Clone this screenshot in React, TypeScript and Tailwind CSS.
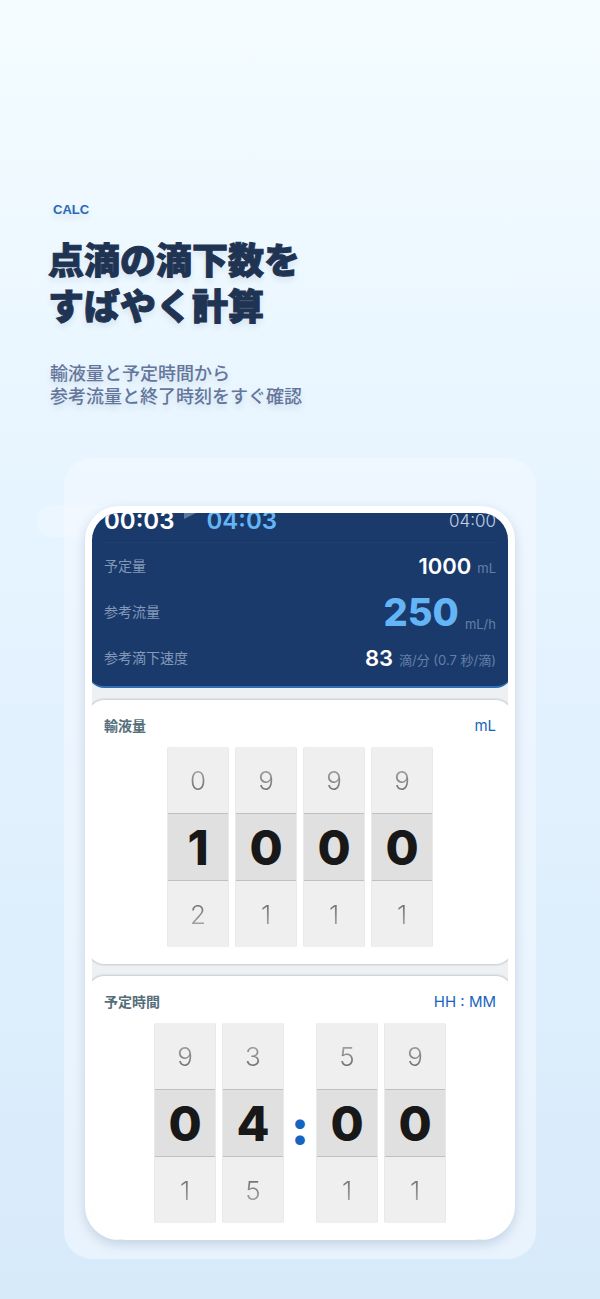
import React from 'react';

interface WheelProps {
  label: string;
  prev: number;
  value: number;
  next: number;
}

const Wheel: React.FC<WheelProps> = ({ label, prev, value, next }) => (
  <div
    role="group"
    aria-label={label}
    className="flex h-[200px] w-[62px] flex-col overflow-hidden rounded-xs border-x border-[#e9e9e9] bg-[#efefef]"
  >
    <button
      type="button"
      className="flex-1 bg-linear-to-b from-[#a8a8a8] from-30% to-[#6a6a6a] to-70% bg-clip-text pt-0.5 text-[26px] leading-none font-light text-transparent"
    >
      {prev}
    </button>
    <output className="flex h-[68px] items-center justify-center border-y border-[#c0c0c0] bg-[#e0e0e0] pt-0.5 text-5xl leading-none font-extrabold text-[#181818]">
      {value}
    </output>
    <button
      type="button"
      className="flex-1 bg-linear-to-b from-[#6a6a6a] from-30% to-[#a8a8a8] to-70% bg-clip-text pt-0.5 text-[26px] leading-none font-light text-transparent"
    >
      {next}
    </button>
  </div>
);

interface ResultRowProps {
  label: string;
  unit: string;
  children: React.ReactNode;
}

const ResultRow: React.FC<ResultRowProps> = ({ label, unit, children }) => (
  <div className="flex h-[46px] items-center justify-between">
    <dt className="text-sm text-[#8499b9]">{label}</dt>
    <dd className="flex items-end gap-1.5">
      {children}
      <span className="text-[13px] leading-6 text-[#6580a8]">{unit}</span>
    </dd>
  </div>
);

const ResultPanel: React.FC = () => (
  <section className="-mx-1 rounded-b-2xl border-b-2 border-[#2f6db5] bg-[#1a3a6b] px-4 pb-[5px] text-white">
    <div className="-mt-2 flex h-[38px] items-start justify-between border-b border-white/3">
      <div className="flex items-center text-2xl leading-8 font-semibold">
        <span>00:03</span>
        <svg viewBox="0 0 12 12" className="mx-[10px] mb-4 h-3 w-3 fill-[#5f789f]" aria-hidden="true">
          <path d="M0 0 12 6 0 12z" />
        </svg>
        <span className="text-[#64b5f6]">04:03</span>
      </div>
      <span className="text-[17px] leading-8 font-light text-[#c3d0e4]">04:00</span>
    </div>
    <dl>
      <ResultRow label="予定量" unit="mL">
        <span className="text-[22px] leading-7 font-semibold">1000</span>
      </ResultRow>
      <ResultRow label="参考流量" unit="mL/h">
        <span className="text-[38px] leading-12 font-extrabold text-[#64b5f6]">250</span>
      </ResultRow>
      <ResultRow label="参考滴下速度" unit="滴/分 (0.7 秒/滴)">
        <span className="text-[22px] leading-7 font-semibold">83</span>
      </ResultRow>
    </dl>
  </section>
);

interface InputCardProps {
  title: string;
  unit: string;
  children: React.ReactNode;
}

const InputCard: React.FC<InputCardProps> = ({ title, unit, children }) => (
  <section className="-mx-1 rounded-2xl bg-white px-4 pt-3.5 pb-[17px] shadow-[0_0_3px_rgba(0,0,0,0.35)] last:rounded-b-none">
    <header className="flex h-6 items-center justify-between text-sm">
      <h2 className="font-bold text-[#546e7a]">{title}</h2>
      <span className="text-[15px] text-[#1565c0]">{unit}</span>
    </header>
    <div className="mt-[9px] flex justify-center gap-1.5">{children}</div>
  </section>
);

const App: React.FC = () => (
  <main className="min-h-screen bg-linear-to-b from-[#f4fcff] via-[#e6f4ff] via-40% to-[#d7eafa] pt-[200px] pb-[39px] font-['Inter','Noto_Sans_CJK_JP',sans-serif]">
    <header className="px-12">
      <p className="pl-[5px] font-['Liberation_Sans',sans-serif] text-[13px] leading-5 font-bold text-[#2b69b8] [text-shadow:0_4px_6px_rgba(30,60,100,0.12)]">
        CALC
      </p>
      <h1 className="mt-[18px] text-4xl leading-[46px] font-black text-[#1f3352] [-webkit-text-stroke:1px_#1f3352] [text-shadow:0_4px_6px_rgba(30,60,100,0.1)]">
        点滴の滴下数を
        <br />
        すばやく計算
      </h1>
      <p className="mt-8 pl-0.5 text-lg leading-[23px] font-medium text-[#64769b] [text-shadow:0_4px_6px_rgba(30,60,100,0.12)]">
        輸液量と予定時間から
        <br />
        参考流量と終了時刻をすぐ確認
      </p>
    </header>

    <div className="relative mx-16 mt-[50px] rounded-[28px] bg-[#f4f9ff]/60 px-[21px] pt-12 pb-[19px]">
      <div className="absolute top-[47px] -left-7 h-8 w-24 rounded-full bg-white/20" />
      <div className="relative rounded-[34px] bg-white px-[7px] pt-[7px] shadow-[0_4px_12px_rgba(60,90,130,0.22)]">
        <div className="flex flex-col gap-3 overflow-hidden rounded-t-[27px] rounded-b-[34px] bg-[#eef1f4]">
          <ResultPanel />
          <InputCard title="輸液量" unit="mL">
            <Wheel label="千の位" prev={0} value={1} next={2} />
            <Wheel label="百の位" prev={9} value={0} next={1} />
            <Wheel label="十の位" prev={9} value={0} next={1} />
            <Wheel label="一の位" prev={9} value={0} next={1} />
          </InputCard>
          <InputCard title="予定時間" unit="HH : MM">
            <Wheel label="時の十の位" prev={9} value={0} next={1} />
            <Wheel label="時の一の位" prev={3} value={4} next={5} />
            <span className="flex w-5 items-center justify-center pt-2 text-5xl leading-none font-black text-[#1565c0]">
              :
            </span>
            <Wheel label="分の十の位" prev={5} value={0} next={1} />
            <Wheel label="分の一の位" prev={9} value={0} next={1} />
          </InputCard>
        </div>
      </div>
    </div>
  </main>
);

export default App;
